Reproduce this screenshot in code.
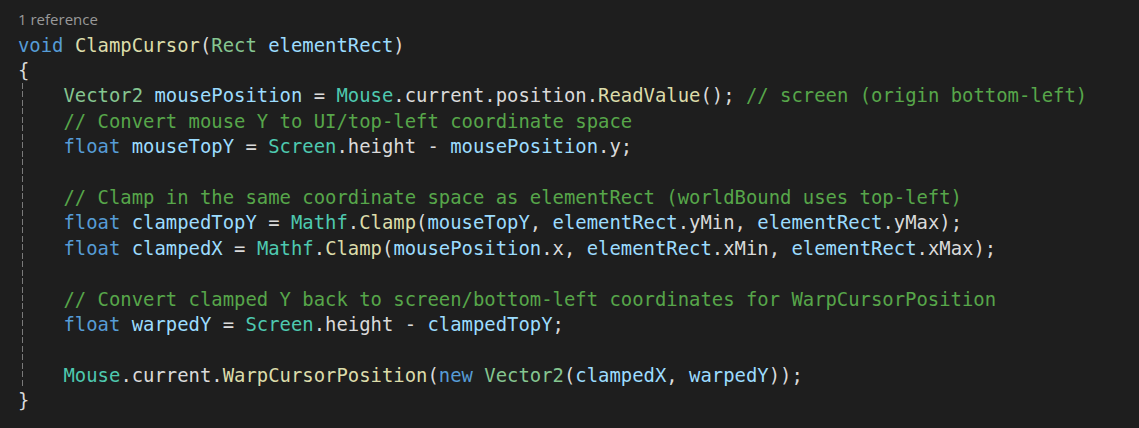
import React from "react";

type Tok = [string, string];

const C: Record<string, string> = {
  k: "text-[#569cd6]",
  f: "text-[#dcdcaa]",
  s: "text-[#86c691]",
  c: "text-[#4ec9b0]",
  v: "text-[#9cdcfe]",
  p: "text-[#dadada]",
  m: "text-[#57a64a]",
};

const lines: Tok[][] = [
  [["k", "void"], ["p", " "], ["f", "ClampCursor"], ["p", "("], ["s", "Rect"], ["p", " "], ["v", "elementRect"], ["p", ")"]],
  [["p", "{"]],
  [
    ["p", "    "], ["s", "Vector2"], ["p", " "], ["v", "mousePosition"], ["p", " = "], ["c", "Mouse"], ["p", ".current.position."],
    ["f", "ReadValue"], ["p", "(); "], ["m", "// screen (origin bottom-left)"],
  ],
  [["p", "    "], ["m", "// Convert mouse Y to UI/top-left coordinate space"]],
  [["p", "    "], ["k", "float"], ["p", " "], ["v", "mouseTopY"], ["p", " = "], ["c", "Screen"], ["p", ".height - "], ["v", "mousePosition"], ["p", ".y;"]],
  [],
  [["p", "    "], ["m", "// Clamp in the same coordinate space as elementRect (worldBound uses top-left)"]],
  [
    ["p", "    "], ["k", "float"], ["p", " "], ["v", "clampedTopY"], ["p", " = "], ["c", "Mathf"], ["p", "."], ["f", "Clamp"], ["p", "("],
    ["v", "mouseTopY"], ["p", ", "], ["v", "elementRect"], ["p", ".yMin, "], ["v", "elementRect"], ["p", ".yMax);"],
  ],
  [
    ["p", "    "], ["k", "float"], ["p", " "], ["v", "clampedX"], ["p", " = "], ["c", "Mathf"], ["p", "."], ["f", "Clamp"], ["p", "("],
    ["v", "mousePosition"], ["p", ".x, "], ["v", "elementRect"], ["p", ".xMin, "], ["v", "elementRect"], ["p", ".xMax);"],
  ],
  [],
  [["p", "    "], ["m", "// Convert clamped Y back to screen/bottom-left coordinates for WarpCursorPosition"]],
  [["p", "    "], ["k", "float"], ["p", " "], ["v", "warpedY"], ["p", " = "], ["c", "Screen"], ["p", ".height - "], ["v", "clampedTopY"], ["p", ";"]],
  [],
  [
    ["p", "    "], ["c", "Mouse"], ["p", ".current."], ["f", "WarpCursorPosition"], ["p", "("], ["k", "new"], ["p", " "], ["s", "Vector2"], ["p", "("],
    ["v", "clampedX"], ["p", ", "], ["v", "warpedY"], ["p", "));"],
  ],
  [["p", "}"]],
];

function Line({ toks }: { toks: Tok[] }) {
  return (
    <div className="h-[25.43px] leading-[25.43px] whitespace-pre">
      {toks.length === 0 ? " " : toks.map((t, i) => (
        <span key={i} className={C[t[0]]}>{t[1]}</span>
      ))}
    </div>
  );
}

export default function App() {
  const head = lines.slice(0, 2);
  const body = lines.slice(2, 14);
  const tail = lines.slice(14);
  return (
    <div className="w-[1139px] h-[428px] bg-[#1e1e1e] pl-[18px] pt-[7px] overflow-hidden">
      <div className="h-[25.5px] leading-[25px] text-[15px] text-[#999999] font-['Open_Sans',sans-serif]">
        1 reference
      </div>
      <div className="font-['DejaVu_Sans_Mono',monospace] text-[18.9px] text-[#dadada]">
        {head.map((l, i) => <Line key={i} toks={l} />)}
        <div className="relative">
          <div className="absolute left-[4px] top-0 bottom-0 w-[1px] bg-[repeating-linear-gradient(to_bottom,#7a7a7a_0px,#7a7a7a_6px,transparent_6px,transparent_8.48px)]" />
          {body.map((l, i) => <Line key={i} toks={l} />)}
        </div>
        {tail.map((l, i) => <Line key={i} toks={l} />)}
      </div>
    </div>
  );
}
